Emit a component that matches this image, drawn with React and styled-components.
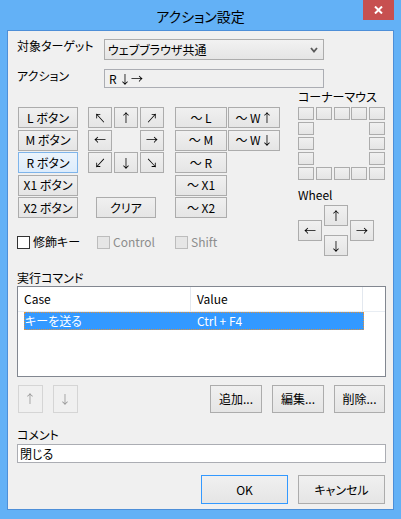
import styled, { createGlobalStyle, css } from "styled-components";

const Global = createGlobalStyle`
  html, body {
    margin: 0;
    padding: 0;
    background: #ffffff;
  }
  body {
    font-family: "Noto Sans CJK JP", "Noto Sans", sans-serif;
    font-size: 12px;
    font-feature-settings: "palt";
    font-variant-emoji: text;
    color: #000;
  }
  * {
    box-sizing: border-box;
  }
`;

const Frame = styled.div`
  width: 401px;
  height: 519px;
  background: #63b1f6;
  padding: 0 7px 9px 7px;
  display: flex;
  flex-direction: column;
`;

const TitleBar = styled.div`
  height: 30px;
  display: grid;
  grid-template-columns: 1fr auto 1fr;
  align-items: center;
`;

const Title = styled.div`
  grid-column: 2;
  font-size: 14px;
  line-height: 16px;
  margin-top: 1px;
`;

const CloseBtn = styled.div`
  grid-column: 3;
  justify-self: end;
  align-self: start;
  width: 31px;
  height: 20px;
  background: #c75050;
  display: flex;
  align-items: center;
  justify-content: center;
`;

const Client = styled.div`
  flex: 1;
  border: 1px solid #4d8fd8;
  background: #f0f0f0;
  padding: 8px 7px 0 9px;
  display: flex;
  flex-direction: column;
`;

const FieldRow = styled.div`
  display: flex;
  align-items: flex-start;
  margin-top: ${(p) => p.$mt || 0}px;
`;

const Label = styled.div`
  width: ${(p) => (p.$w ? `${p.$w}px` : "auto")};
  line-height: 14px;
  white-space: nowrap;
`;

const Combo = styled.div`
  width: 220px;
  height: 21px;
  border: 1px solid #acacac;
  background: linear-gradient(#f2f2f2, #e5e5e5);
  display: flex;
  align-items: center;
  justify-content: space-between;
  padding: 0 5px 0 3px;
  line-height: 14px;
`;

const TextBox = styled.div`
  width: ${(p) => (p.$w ? `${p.$w}px` : "100%")};
  height: 19px;
  border: 1px solid #abadb3;
  background: ${(p) => (p.$readonly ? "#f0f0f0" : "#ffffff")};
  display: flex;
  align-items: center;
  padding-left: ${(p) => p.$pl || 2}px;
  line-height: 14px;
  margin-top: ${(p) => p.$mt || 0}px;
`;

/* grayscale-rendered arrow glyph (no colour fringes on thin stems) */
const Arrow = styled.span`
  display: inline-block;
  will-change: transform;
`;

const Mid = styled.div`
  display: flex;
  align-items: flex-start;
  margin-top: 2px;
`;

const LeftArea = styled.div`
  display: flex;
  flex-direction: column;
  padding-top: 17px;
  margin-left: 1px;
`;

const ButtonCols = styled.div`
  display: flex;
  align-items: flex-start;
`;

const BtnGrid = styled.div`
  display: grid;
  grid-template-columns: ${(p) => p.$cols};
  grid-template-rows: repeat(5, 21px);
  column-gap: ${(p) => p.$cgap || 0}px;
  row-gap: 1.5px;
  margin-left: ${(p) => p.$ml || 0}px;
`;

const Btn = styled.button`
  font: inherit;
  font-feature-settings: "palt";
  color: #000;
  margin: 0;
  padding: 0;
  width: ${(p) => (p.$w ? `${p.$w}px` : "100%")};
  height: ${(p) => (p.$h ? `${p.$h}px` : "100%")};
  border: 1px solid #acacac;
  background: linear-gradient(#f0f0f0, #e5e5e5);
  display: flex;
  align-items: center;
  justify-content: center;
  line-height: 14px;
  white-space: nowrap;
  grid-column: ${(p) => p.$col || "auto"};
  grid-row: ${(p) => p.$row || "auto"};
  justify-self: ${(p) => p.$justify || "stretch"};

  ${(p) =>
    p.$active &&
    css`
      border-color: #7eb4ea;
      background: linear-gradient(#ecf4fc, #dcecfc);
    `}

  ${(p) =>
    p.$default &&
    css`
      border-color: #3399ff;
    `}

  &:disabled {
    border-color: #d5d5d5;
    background: #f0f0f0;
    color: #9a9a9a;
  }
`;

const CheckRow = styled.div`
  display: flex;
  align-items: center;
  margin-top: 17px;
  margin-left: -1px;
`;

const CheckItem = styled.div`
  display: flex;
  align-items: center;
  gap: 3px;
  width: ${(p) => (p.$w ? `${p.$w}px` : "auto")};
  color: ${(p) => (p.$disabled ? "#8d8d8d" : "#000")};
  line-height: 14px;
`;

const Box = styled.span`
  width: 13px;
  height: 13px;
  border: 1px solid ${(p) => (p.$disabled ? "#bcbcbc" : "#333333")};
  background: ${(p) => (p.$disabled ? "#e6e6e6" : "#ffffff")};
`;

const RightArea = styled.div`
  display: flex;
  flex-direction: column;
  margin-left: 18px;
`;

const CornerGrid = styled.div`
  display: grid;
  grid-template-columns: repeat(5, 16px);
  grid-template-rows: repeat(5, 13px);
  column-gap: 1.75px;
  row-gap: 2px;
  margin-top: 3px;
`;

const Cell = styled.div`
  grid-row: ${(p) => p.$r};
  grid-column: ${(p) => p.$c};
  border: 1px solid #acacac;
  background: linear-gradient(#f0f0f0, #e5e5e5);
`;

const WheelGrid = styled.div`
  display: grid;
  grid-template-columns: repeat(3, 24px);
  grid-template-rows: 15px 6px 9px 6px 15px;
  column-gap: 2px;
  margin-top: 3px;
`;

const ListView = styled.div`
  height: 91px;
  border: 1px solid #828790;
  background: #ffffff;
  margin-top: 1px;
`;

const Header = styled.div`
  display: flex;
  height: 25px;
  border-bottom: 1px solid #e8edf3;
`;

const HeaderCell = styled.div`
  width: ${(p) => (p.$w ? `${p.$w}px` : "auto")};
  flex: ${(p) => (p.$w ? "none" : 1)};
  border-right: ${(p) => (p.$w ? "1px solid #e3e8ef" : "none")};
  padding-left: 6px;
  display: flex;
  align-items: center;
  line-height: 14px;
`;

const Row = styled.div`
  display: flex;
  width: 340px;
  height: 18px;
  margin-left: 6px;
  background: #3399ff;
  color: #ffffff;
  outline: 1px dotted #e0913a;
  outline-offset: -1px;
  line-height: 14px;
`;

const RowCell = styled.div`
  width: ${(p) => (p.$w ? `${p.$w}px` : "auto")};
  flex: ${(p) => (p.$w ? "none" : 1)};
  padding-left: ${(p) => p.$pl}px;
  display: flex;
  align-items: center;
`;

const ActionRow = styled.div`
  display: flex;
  align-items: center;
  gap: 10px;
  margin-top: ${(p) => p.$mt}px;
  margin-left: ${(p) => p.$ml || 0}px;
  margin-right: 1px;
  justify-content: ${(p) => p.$justify || "flex-start"};
`;

const Spacer = styled.div`
  flex: 1;
`;

const SectionLabel = styled.div`
  line-height: 14px;
  margin-top: ${(p) => p.$mt}px;
`;

const Chevron = () => (
  <svg width="8" height="6" viewBox="0 0 8 6">
    <polyline points="1,1 4,4.5 7,1" fill="none" stroke="#5a5a5a" strokeWidth="1.8" />
  </svg>
);

const Cross = () => (
  <svg width="9" height="8" viewBox="0 0 9 8">
    <path d="M1 0.5 L8 7.5 M8 0.5 L1 7.5" stroke="#fff" strokeWidth="2" />
  </svg>
);

const cornerCells = [
  [1, 1], [1, 2], [1, 3], [1, 4], [1, 5],
  [2, 1], [2, 5],
  [3, 1], [3, 5],
  [4, 1], [4, 5],
  [5, 1], [5, 2], [5, 3], [5, 4], [5, 5],
];

export default function App() {
  return (
    <>
      <Global />
      <Frame>
        <TitleBar>
          <Title>アクション設定</Title>
          <CloseBtn>
            <Cross />
          </CloseBtn>
        </TitleBar>
        <Client>
          <FieldRow>
            <Label $w={87}>対象ターゲット</Label>
            <Combo>
              <span>ウェブブラウザ共通</span>
              <Chevron />
            </Combo>
          </FieldRow>
          <FieldRow $mt={9}>
            <Label $w={87}>アクション</Label>
            <TextBox $w={220} $readonly $pl={4}>
              R&nbsp;<Arrow>↓→</Arrow>
            </TextBox>
          </FieldRow>

          <Mid>
            <LeftArea>
              <ButtonCols>
                <BtnGrid $cols="60px">
                  <Btn>L ボタン</Btn>
                  <Btn>M ボタン</Btn>
                  <Btn $active>R ボタン</Btn>
                  <Btn>X1 ボタン</Btn>
                  <Btn>X2 ボタン</Btn>
                </BtnGrid>
                <BtnGrid $cols="repeat(3, 24px)" $cgap={2} $ml={10}>
                  <Btn><Arrow>↖</Arrow></Btn>
                  <Btn><Arrow>↑</Arrow></Btn>
                  <Btn><Arrow>↗</Arrow></Btn>
                  <Btn $col="1" $row="2"><Arrow>←</Arrow></Btn>
                  <Btn $col="3" $row="2"><Arrow>→</Arrow></Btn>
                  <Btn $col="1" $row="3"><Arrow>↙</Arrow></Btn>
                  <Btn $col="2" $row="3"><Arrow>↓</Arrow></Btn>
                  <Btn $col="3" $row="3"><Arrow>↘</Arrow></Btn>
                  <Btn $col="1 / 4" $row="5" $w={60} $justify="center">
                    クリア
                  </Btn>
                </BtnGrid>
                <BtnGrid $cols="repeat(2, 52px)" $cgap={1} $ml={11}>
                  <Btn>〜 L</Btn>
                  <Btn>〜 W<Arrow>↑</Arrow></Btn>
                  <Btn>〜 M</Btn>
                  <Btn>〜 W<Arrow>↓</Arrow></Btn>
                  <Btn $col="1" $row="3">〜 R</Btn>
                  <Btn $col="1" $row="4">〜 X1</Btn>
                  <Btn $col="1" $row="5">〜 X2</Btn>
                </BtnGrid>
              </ButtonCols>
              <CheckRow>
                <CheckItem $w={80}>
                  <Box />
                  修飾キー
                </CheckItem>
                <CheckItem $w={78} $disabled>
                  <Box $disabled />
                  Control
                </CheckItem>
                <CheckItem $disabled>
                  <Box $disabled />
                  Shift
                </CheckItem>
              </CheckRow>
            </LeftArea>

            <RightArea>
              <Label>コーナーマウス</Label>
              <CornerGrid>
                {cornerCells.map(([r, c]) => (
                  <Cell key={`${r}-${c}`} $r={r} $c={c} />
                ))}
              </CornerGrid>
              <SectionLabel $mt={8}>Wheel</SectionLabel>
              <WheelGrid>
                <Btn $col="2" $row="1 / 3"><Arrow>↑</Arrow></Btn>
                <Btn $col="1" $row="2 / 5"><Arrow>←</Arrow></Btn>
                <Btn $col="3" $row="2 / 5"><Arrow>→</Arrow></Btn>
                <Btn $col="2" $row="4 / 6"><Arrow>↓</Arrow></Btn>
              </WheelGrid>
            </RightArea>
          </Mid>

          <SectionLabel $mt={15}>実行コマンド</SectionLabel>
          <ListView>
            <Header>
              <HeaderCell $w={173}>Case</HeaderCell>
              <HeaderCell $w={172}>Value</HeaderCell>
              <HeaderCell />
            </Header>
            <Row>
              <RowCell $w={167} $pl={1}>キーを送る</RowCell>
              <RowCell $pl={6}>Ctrl + F4</RowCell>
            </Row>
          </ListView>

          <ActionRow $mt={8} $ml={1}>
            <Btn $w={25} $h={28} disabled><Arrow>↑</Arrow></Btn>
            <Btn $w={25} $h={28} disabled><Arrow>↓</Arrow></Btn>
            <Spacer />
            <Btn $w={52} $h={28}>追加...</Btn>
            <Btn $w={52} $h={28}>編集...</Btn>
            <Btn $w={51} $h={28}>削除...</Btn>
          </ActionRow>

          <SectionLabel $mt={15}>コメント</SectionLabel>
          <TextBox $mt={2} $pl={2}>閉じる</TextBox>

          <ActionRow $mt={12} $justify="flex-end">
            <Btn $w={87} $h={29} $default>OK</Btn>
            <Btn $w={87} $h={29}>キャンセル</Btn>
          </ActionRow>
        </Client>
      </Frame>
    </>
  );
}
